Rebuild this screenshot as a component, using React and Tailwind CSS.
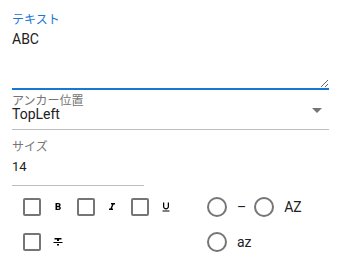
const icons = {
  bold: "M15.6 10.79c.97-.67 1.65-1.77 1.65-2.79 0-2.26-1.75-4-4-4H7v14h7.04c2.09 0 3.71-1.7 3.71-3.79 0-1.52-.86-2.82-2.1-3.42zM10 6.5h3c.83 0 1.5.67 1.5 1.5s-.67 1.5-1.5 1.5h-3v-3zm3.5 9H10v-3h3.5c.83 0 1.5.67 1.5 1.5s-.67 1.5-1.5 1.5z",
  italic: "M10 4v3h2.21l-3.42 8H6v3h8v-3h-2.21l3.42-8H18V4z",
  underline: "M12 17c3.31 0 6-2.69 6-6V3h-2.5v8c0 1.93-1.57 3.5-3.5 3.5S8.5 12.93 8.5 11V3H6v8c0 3.31 2.69 6 6 6zm-7 2v2h14v-2H5z",
  strike: "M10 19h4v-3h-4v3zM5 4v3h5v3h4V7h5V4H5zM3 14h18v-2H3v2z",
}

function CheckItem({ icon }) {
  return (
    <label className="flex items-center w-[54px] h-[35px]">
      <span className="w-6 h-6 flex items-center justify-center">
        <span className="w-[18px] h-[18px] border-2 border-[#757575] rounded-[2px]" />
      </span>
      <svg viewBox="0 0 24 24" className="w-3 h-3 ml-2 fill-black">
        <path d={icons[icon]} />
      </svg>
    </label>
  )
}

function RadioItem({ text, className = "" }) {
  return (
    <label className={`flex items-center h-[35px] ${className}`}>
      <span className="w-6 h-6 flex items-center justify-center">
        <span className="w-5 h-5 border-2 border-[#757575] rounded-full" />
      </span>
      <span className="ml-2 text-[14px] leading-[18px] text-[#212121]">{text}</span>
    </label>
  )
}

export default function App() {
  return (
    <main className="w-[338px] h-[261px] bg-white overflow-hidden font-['Roboto','Noto_Sans_CJK_JP',sans-serif] text-[#212121]">
      <div className="pl-[12px] pr-[9px] pt-[13px]">
        {/* Text field (focused) */}
        <div className="text-[12px] leading-[14px] text-[#1976d2]">テキスト</div>
        <textarea
          defaultValue="ABC"
          className="block mt-[3px] w-full h-[60px] resize-y border-b-2 border-[#1976d2] outline-none text-[14px] leading-[18px] text-[#212121] bg-transparent"
        />

        {/* Anchor select */}
        <div className="mt-[6px] text-[12px] leading-[10px] text-[#757575]">アンカー位置</div>
        <div className="flex justify-between mt-[1px] pb-[8px] border-b border-[#bdbdbd]">
          <span className="text-[14px] leading-[14px]">TopLeft</span>
          <svg viewBox="7 10 10 5" className="w-[10px] h-[5px] mt-[1px] mr-[7px] fill-[#757575]">
            <path d="M7 10l5 5 5-5z" />
          </svg>
        </div>

        {/* Size */}
        <div className="w-[132px] border-b border-[#bdbdbd] pb-[9px]">
          <div className="mt-[10px] text-[12px] leading-[14px] text-[#757575]">サイズ</div>
          <div className="mt-[4px] text-[13px] leading-[18px]">14</div>
        </div>

        {/* Style options */}
        <div className="flex mt-[3px]">
          <div className="w-[193px] pl-[8px] flex flex-wrap">
            <CheckItem icon="bold" />
            <CheckItem icon="italic" />
            <CheckItem icon="underline" />
            <CheckItem icon="strike" />
          </div>
          <div className="flex-1 flex flex-wrap">
            <RadioItem text="–" className="mr-[6px]" />
            <RadioItem text="AZ" className="mr-[9px]" />
            <RadioItem text="az" />
          </div>
        </div>
      </div>
    </main>
  )
}
